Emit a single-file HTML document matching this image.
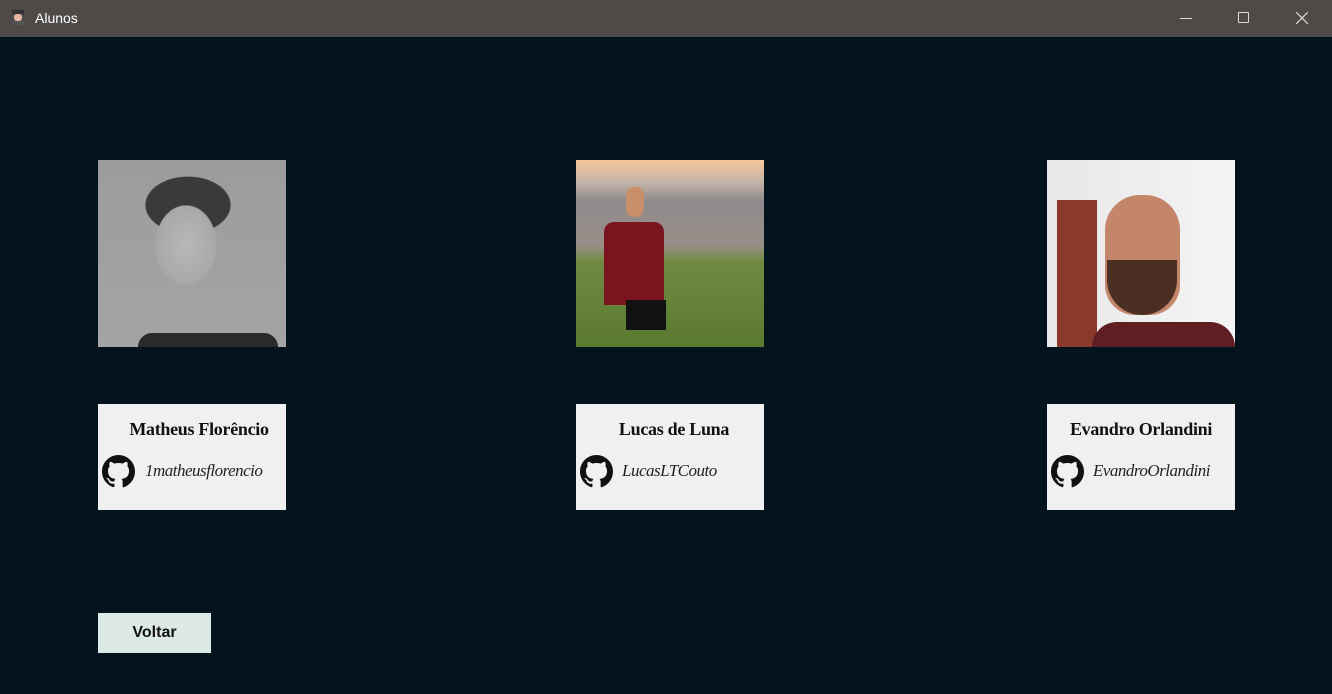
<!DOCTYPE html>
<html><head><meta charset="utf-8"><style>
*{margin:0;padding:0;box-sizing:border-box}
body{width:1332px;height:694px;background:#03141f;position:relative;overflow:hidden;font-family:"Liberation Serif",serif}
.tb{position:absolute;left:0;top:0;width:1332px;height:37px;background:#4d4a48;color:#fff;font-family:"Liberation Sans",sans-serif;font-size:14px}
.ph{position:absolute;top:160px;width:188px;height:187px;overflow:hidden}
.card{position:absolute;top:404px;width:188px;height:106px;background:#f0f0f0}
.card .n{position:absolute;top:15px;left:0;right:0;text-align:center;font-weight:bold;font-size:18px;color:#111;letter-spacing:-0.3px}
.card .g{position:absolute;left:4px;top:51px;width:33px;height:33px}
.card .u{position:absolute;top:57px;font-style:italic;font-size:17px;color:#222;letter-spacing:-0.5px}
</style></head><body>
<div class="tb">
<div style="position:absolute;left:12px;top:10px;width:12px;height:16px;"><div style="width:12px;height:4px;background:#333"></div><div style="margin:0 2px;width:8px;height:7px;background:#e8b9a0;border-radius:3px"></div><div style="width:12px;height:4px;background:#555;border-radius:3px 3px 0 0"></div></div>
<div style="position:absolute;left:35px;top:10px">Alunos</div>
<div style="position:absolute;left:1180px;top:18px;width:12px;height:1px;background:#ddd"></div>
<div style="position:absolute;left:1238px;top:12px;width:11px;height:11px;border:1px solid #ddd;border-radius:1px"></div>
<svg style="position:absolute;left:1296px;top:12px" width="12" height="12"><path d="M0 0L12 12M12 0L0 12" stroke="#ddd" stroke-width="1.2"/></svg>
</div>
<div class="ph" style="left:98px;background:radial-gradient(ellipse 50px 65px at 88px 85px,#b8b8b8 0,#a8a8a8 60%,transparent 62%),radial-gradient(ellipse 60px 40px at 90px 45px,#3a3a3a 0,#3a3a3a 70%,transparent 72%),linear-gradient(#9c9c9c,#a4a4a4);">
<div style="position:absolute;left:40px;bottom:0;width:140px;height:14px;background:#2a2a2a;border-radius:40px 40px 0 0"></div></div>
<div class="ph" style="left:576px;background:linear-gradient(#f6c89a 0,#c5b4a8 12%,#8d8a8c 22%,#9a8f88 45%,#6f8a40 55%,#5a7a30 100%);">
<div style="position:absolute;left:28px;top:62px;width:60px;height:83px;background:#7a1520;border-radius:10px 10px 0 0"></div>
<div style="position:absolute;left:50px;top:27px;width:18px;height:30px;background:#c98f6a;border-radius:8px"></div>
<div style="position:absolute;left:50px;top:140px;width:40px;height:30px;background:#111"></div></div>
<div class="ph" style="left:1047px;background:linear-gradient(90deg,#e8e8e8,#f4f4f4);">
<div style="position:absolute;left:10px;top:40px;width:40px;height:147px;background:#8a3a2a"></div>
<div style="position:absolute;left:58px;top:35px;width:75px;height:120px;background:#c4866a;border-radius:35px 35px 30px 30px"></div>
<div style="position:absolute;left:60px;top:100px;width:70px;height:55px;background:#4a2f22;border-radius:0 0 35px 35px"></div>
<div style="position:absolute;left:45px;top:162px;width:143px;height:25px;background:#5e1e22;border-radius:30px 30px 0 0"></div></div>

<svg width="0" height="0" style="position:absolute"><defs><path id="gh" fill="#111" d="M8 0C3.58 0 0 3.58 0 8c0 3.54 2.29 6.53 5.47 7.59.4.07.55-.17.55-.38v-1.33c-2.23.48-2.7-1.07-2.7-1.07-.36-.92-.89-1.17-.89-1.17-.73-.5.06-.49.06-.49.8.06 1.23.83 1.23.83.72 1.22 1.87.87 2.33.66.07-.52.28-.87.5-1.07-1.78-.2-3.64-.89-3.64-3.95 0-.87.31-1.59.82-2.15-.08-.2-.36-1.02.08-2.12 0 0 .67-.21 2.2.82a7.6 7.6 0 014 0c1.53-1.04 2.2-.82 2.2-.82.44 1.1.16 1.92.08 2.12.51.56.82 1.27.82 2.15 0 3.07-1.87 3.75-3.650 3.95.29.25.54.73.54 1.48v2.2c0 .21.15.46.55.38A8.01 8.01 0 0016 8c0-4.42-3.58-8-8-8z"/></defs></svg>

<div class="card" style="left:98px"><div class="n" style="padding-left:14px">Matheus Florêncio</div>
<svg class="g" viewBox="0 0 16 16"><use href="#gh"/></svg>
<div class="u" style="left:47px">1matheusflorencio</div></div>
<div class="card" style="left:576px"><div class="n" style="padding-left:8px">Lucas de Luna</div>
<svg class="g" viewBox="0 0 16 16"><use href="#gh"/></svg>
<div class="u" style="left:46px">LucasLTCouto</div></div>
<div class="card" style="left:1047px"><div class="n">Evandro Orlandini</div>
<svg class="g" viewBox="0 0 16 16"><use href="#gh"/></svg>
<div class="u" style="left:46px">EvandroOrlandini</div></div>

<div style="position:absolute;left:98px;top:613px;width:113px;height:40px;background:#dde9e4;font-family:'Liberation Sans',sans-serif;font-weight:bold;font-size:16px;text-align:center;line-height:40px;color:#111">Voltar</div>
</body></html>
